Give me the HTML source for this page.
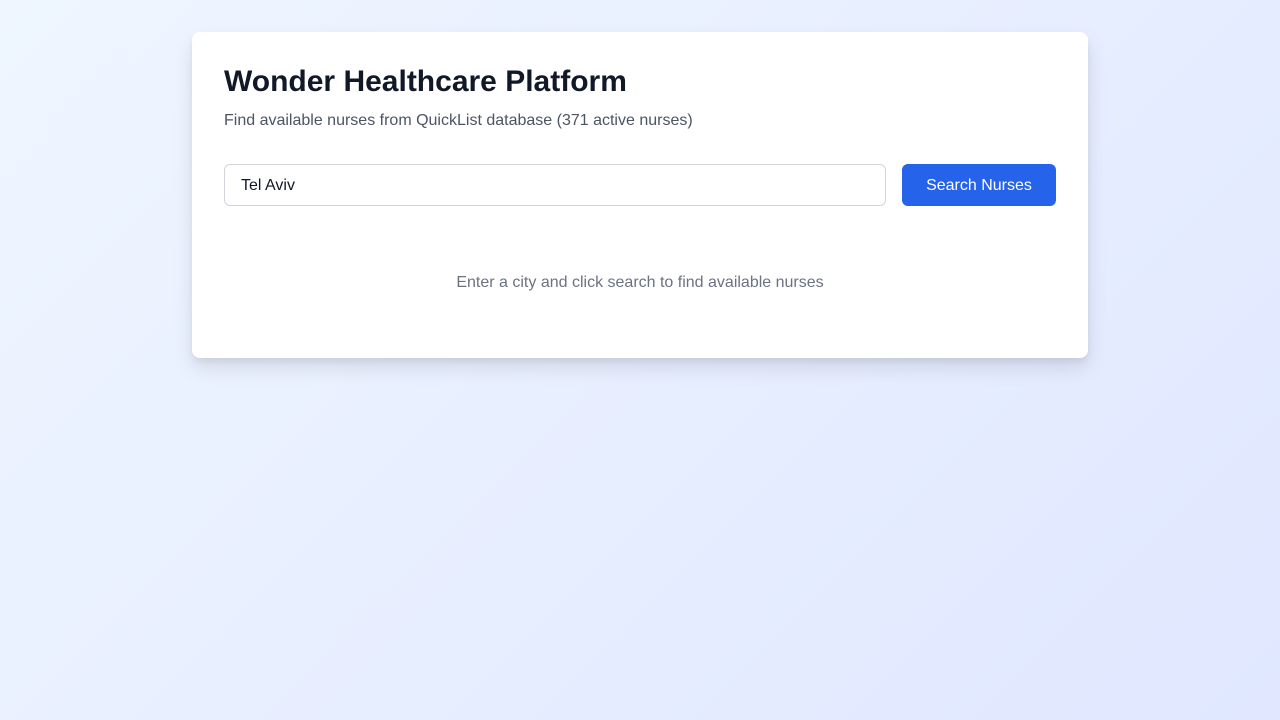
<!DOCTYPE html>
<html><head><meta charset="utf-8"><style>
html,body{margin:0;height:720px;}
body{background:linear-gradient(135deg,#eff6ff 0%,#e0e7ff 100%);font-family:"Liberation Sans",sans-serif;}
.card{position:absolute;left:192px;top:32px;width:896px;height:326px;background:#fff;border-radius:8px;box-shadow:0 10px 20px rgba(0,0,0,0.1),0 4px 6px rgba(0,0,0,0.05);box-sizing:border-box;padding:32px;}
h1{margin:0;font-size:30px;font-weight:700;color:#111827;line-height:36px;position:absolute;left:32px;top:32px;}
.sub{position:absolute;left:32px;top:80px;font-size:16px;color:#4b5563;}
.inp{position:absolute;left:32px;top:132px;width:662px;height:42px;border:1px solid #d1d5db;border-radius:6px;box-sizing:border-box;padding-left:16px;padding-top:1px;line-height:40px;font-size:16px;color:#111827;}
.btn{position:absolute;left:710px;top:132px;width:154px;height:42px;background:#2563eb;border-radius:6px;color:#fff;font-size:16px;text-align:center;line-height:44px;}
.empty{position:absolute;left:0;right:0;top:242px;text-align:center;font-size:16px;color:#6b7280;}
</style></head><body>
<div class="card">
<h1>Wonder Healthcare Platform</h1>
<div class="sub">Find available nurses from QuickList database (371 active nurses)</div>
<div class="inp">Tel Aviv</div>
<div class="btn">Search Nurses</div>
<div class="empty">Enter a city and click search to find available nurses</div>
</div>
</body></html>
